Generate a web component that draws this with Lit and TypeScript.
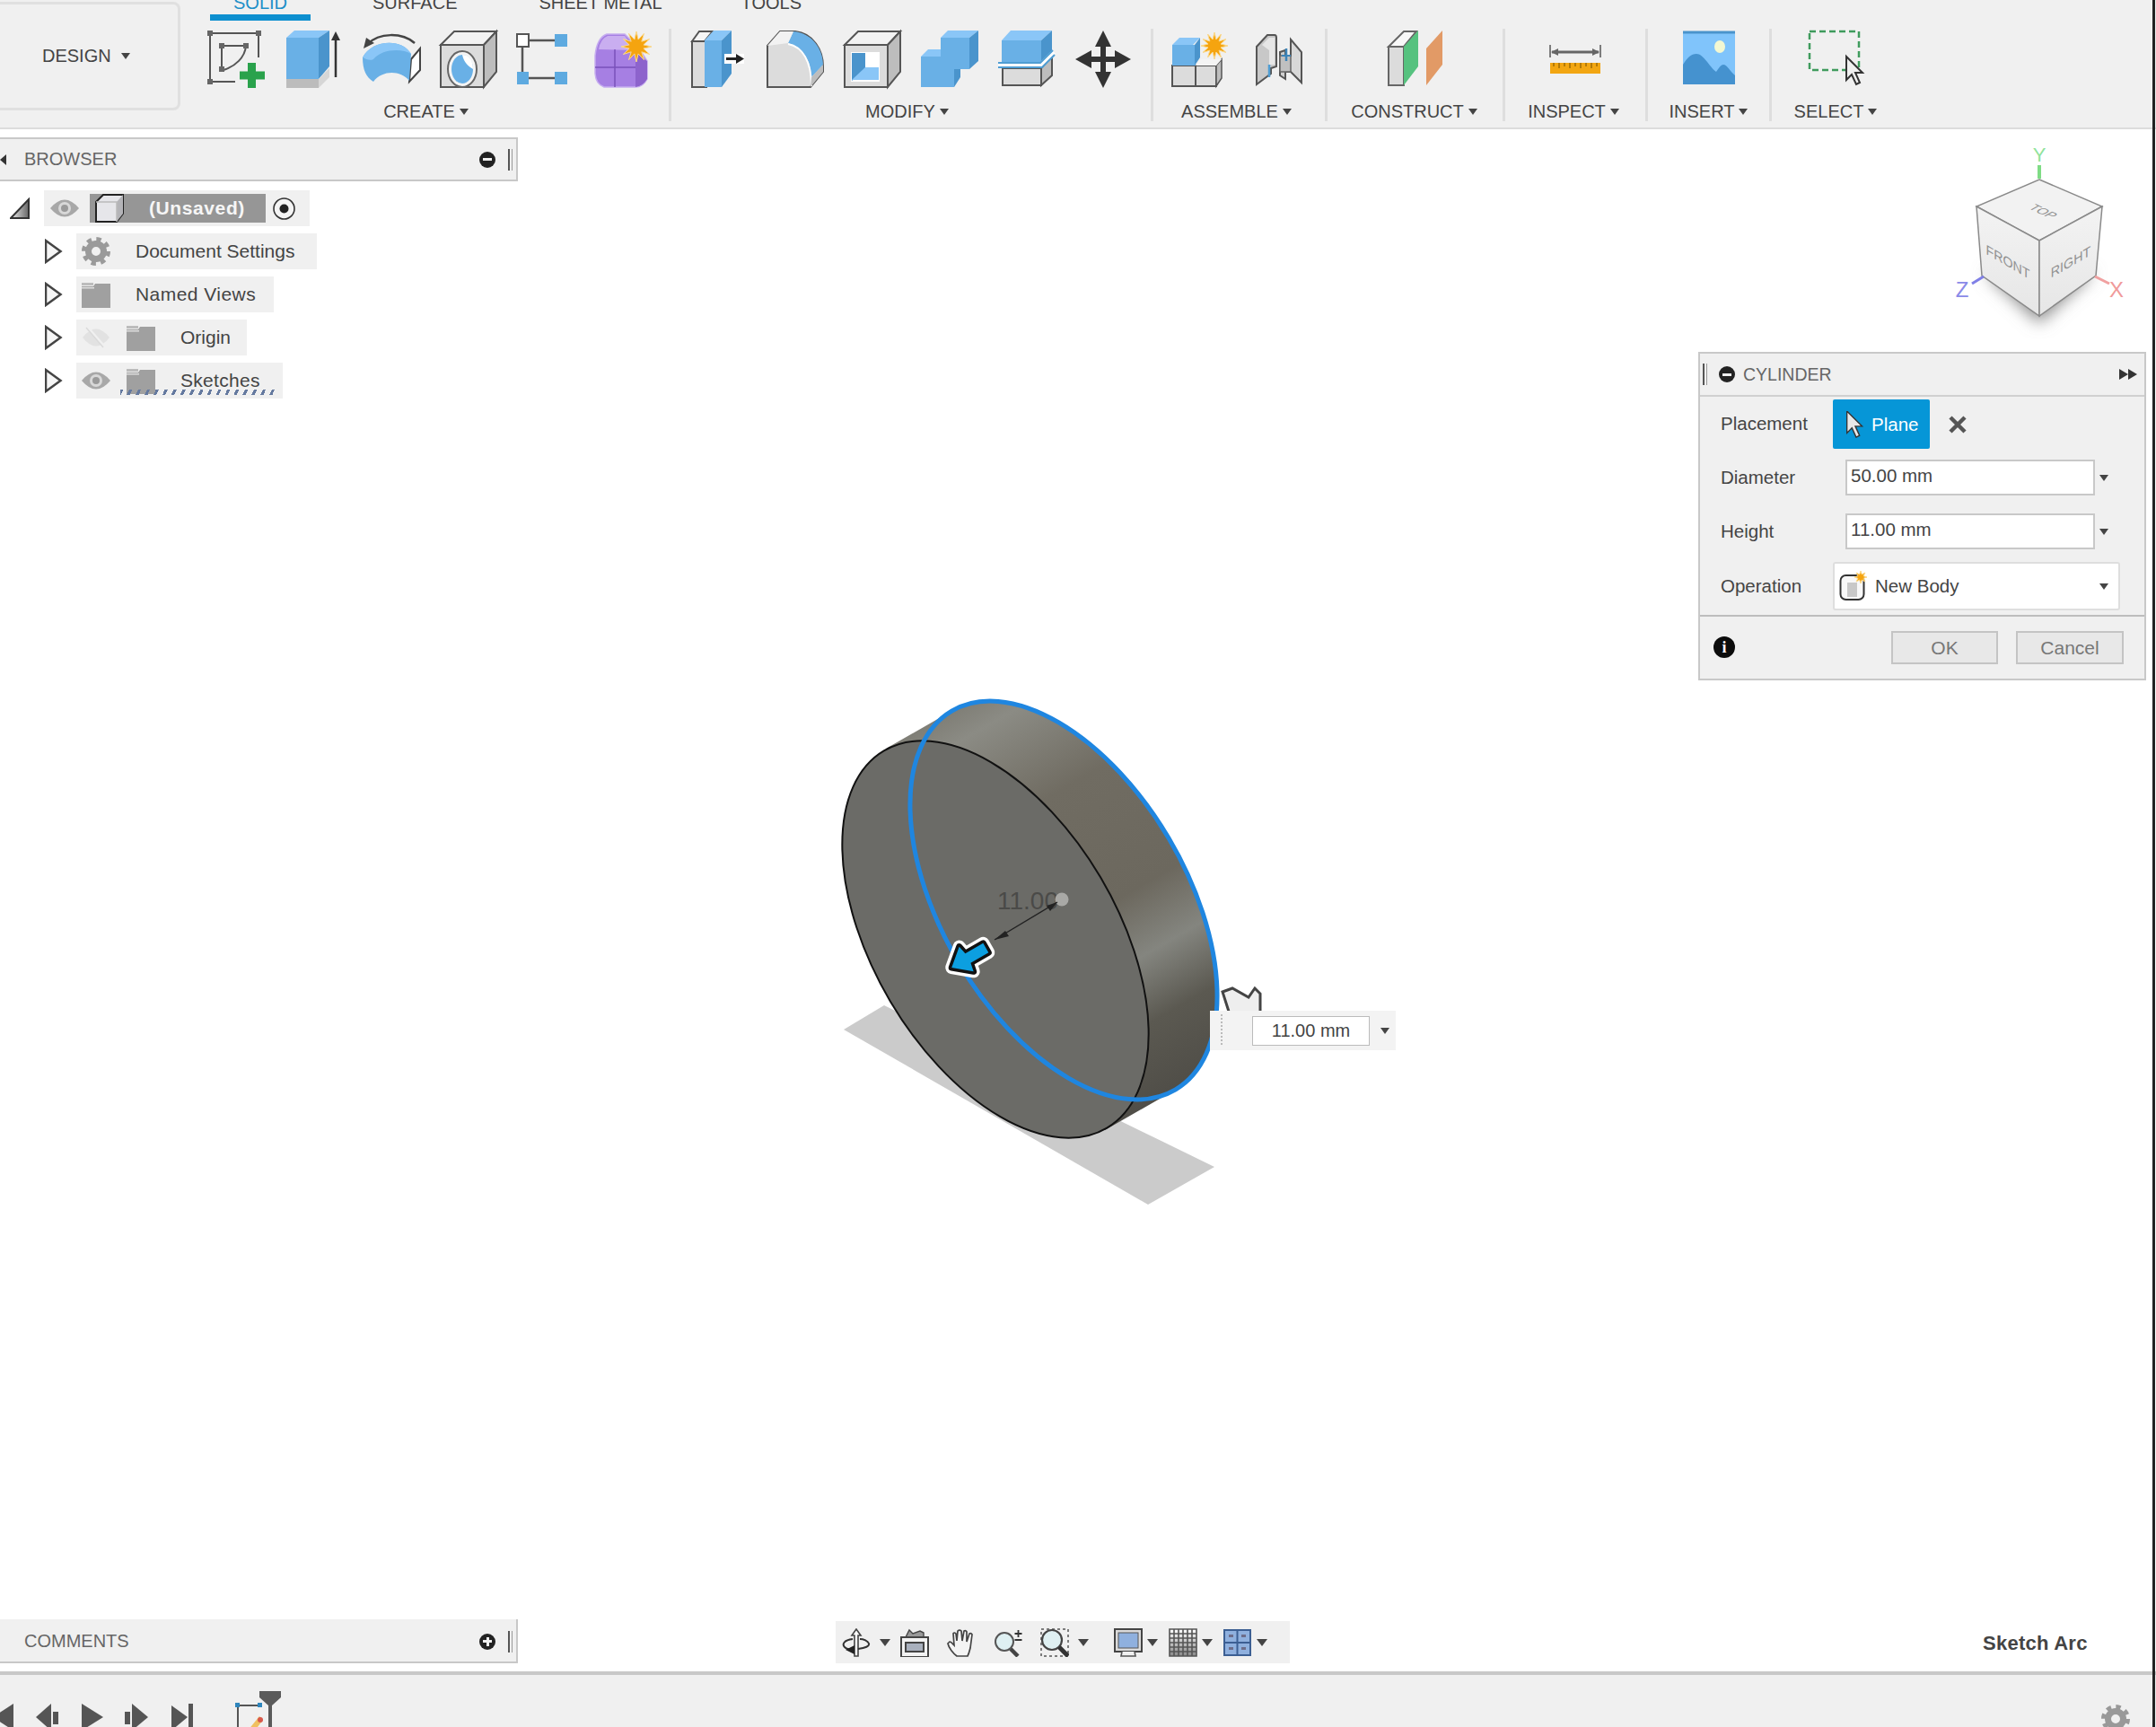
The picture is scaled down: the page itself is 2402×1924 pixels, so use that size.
import { LitElement, html, css, svg } from "lit";
import { customElement } from "lit/decorators.js";

const star = (cx: number, cy: number, r: number, n = 12) => {
  const pts: string[] = [];
  for (let i = 0; i < n * 2; i++) {
    const rad = i % 2 ? r * 0.48 : r;
    const a = (Math.PI * i) / n - Math.PI / 2;
    pts.push(`${(cx + rad * Math.cos(a)).toFixed(1)},${(cy + rad * Math.sin(a)).toFixed(1)}`);
  }
  return svg`<polygon points=${pts.join(" ")} fill="#f5a40f" stroke="#fbd98c" stroke-width="1"/>`;
};

const H = (x: number, y: number, c = "#666", s = 6) =>
  svg`<rect x=${x - s / 2} y=${y - s / 2} width=${s} height=${s} fill=${c}/>`;

const CURSOR = "M0 0 L0 26 L6 20 L11 31 L15 29 L10 18 L18 18 Z";

const ICONS: Record<string, unknown> = {
  sketch: svg`
    <path d="M2 3V57M2 3H56M56 3V30M2 57H30" fill="none" stroke="#555" stroke-width="2"/>
    ${H(2, 3)}${H(56, 3)}${H(2, 57)}
    <path d="M15 17H42M15 17V43M42 17C41 30 30 40 17 44" fill="none" stroke="#555" stroke-width="2"/>
    ${H(15, 17)}${H(42, 17)}${H(15, 43)}
    <rect x="44" y="36" width="9" height="28" fill="#2aa24c"/><rect x="35" y="45.5" width="28" height="9" fill="#2aa24c"/>`,
  extrude: svg`
    <polygon points="1,8 10,0 49,0 37,8" fill="#8ac6f7"/>
    <polygon points="1,8 37,8 37,54 1,54" fill="#69b0e6"/>
    <polygon points="37,8 49,0 49,40 37,54" fill="#4a94cc"/>
    <polygon points="1,54 37,54 37,64 1,64" fill="#bcbcbc"/>
    <polygon points="37,54 49,42 49,52 37,64" fill="#d6d6d6"/>
    <path d="M56 52V8" stroke="#333" stroke-width="2.5"/><polygon points="56,1 61,11 51,11" fill="#333"/>`,
  revolve: svg`
    <path d="M6 15C18 2 44 2 58 14" fill="none" stroke="#444" stroke-width="2.5"/><polygon points="1,20 4,8 13,14" fill="#444"/>
    <path d="M54 32L64 20V44L52 57Z" fill="#fff" stroke="#444" stroke-width="2"/>
    <path d="M0 30C10 10 44 8 54 26L52 56C42 44 22 44 12 57C4 52 0 44 0 30Z" fill="#69b0e6"/>
    <path d="M0 30C10 10 44 8 54 26C44 20 22 20 12 32C8 34 4 32 0 30Z" fill="#8ac6f7"/>`,
  hole: svg`
    <polygon points="1,16 16,1 63,1 49,16" fill="#f2f2f2" stroke="#555" stroke-width="2"/>
    <polygon points="49,16 63,1 63,46 49,63" fill="#bdbdbd" stroke="#555" stroke-width="2"/>
    <rect x="1" y="16" width="48" height="47" fill="#dcdcdc" stroke="#555" stroke-width="2"/>
    <ellipse cx="25" cy="43" rx="16" ry="20" fill="#f4f4f4" stroke="#666" stroke-width="2"/>
    <ellipse cx="25" cy="43" rx="12" ry="16" fill="#69b0e6"/>
    <path d="M25 27C33 27 37 34 37 43C32 40 27 36 25 27Z" fill="#fff"/>`,
  pattern: svg`
    <path d="M13 11H42M6 18V46M13 53H42" stroke="#555" stroke-width="2.5" fill="none"/>
    <rect x="0" y="4" width="13" height="14" fill="#fff" stroke="#555" stroke-width="2"/>
    <rect x="42" y="4" width="14" height="14" fill="#5eaae0"/>
    <rect x="0" y="46" width="13" height="14" fill="#5eaae0"/><rect x="42" y="46" width="14" height="14" fill="#5eaae0"/>`,
  form: svg`
    <path d="M1 28Q3 8 14 4H34L50 20L59 34V54Q54 64 44 63H11Q2 60 1 48Z" fill="#a67fe3" stroke="#c6adf0" stroke-width="1.5"/>
    <path d="M46 24L59 34V54Q54 62 46 63Z" fill="#8d63cc"/>
    <path d="M5 21Q7 9 15 6H34L46 22Z" fill="#c9aef0"/>
    <path d="M1 41H46M23 21V63" stroke="#7a52ba" stroke-width="1.5" fill="none"/>
    ${star(47, 18, 17)}`,
  presspull: svg`
    <polygon points="3,12 11,1 26,1 17,12" fill="#f6f6f6" stroke="#555" stroke-width="2"/>
    <rect x="3" y="12" width="16" height="51" fill="#dcdcdc" stroke="#555" stroke-width="2"/>
    <polygon points="17,11 27,0 47,0 36,11" fill="#8ac6f7"/>
    <rect x="17" y="11" width="19" height="52" fill="#69b0e6"/>
    <polygon points="36,11 47,0 47,48 36,63" fill="#4a94cc"/>
    <rect x="39" y="26" width="22" height="11" fill="#fff"/>
    <path d="M41 31.5H54" stroke="#222" stroke-width="3"/><polygon points="52,26 61,31.5 52,37" fill="#222"/>`,
  fillet: svg`
    <path d="M1 17L15 1H32C52 3 63 22 63 40V46L49 63H1Z" fill="#dcdcdc" stroke="#555" stroke-width="2"/>
    <path d="M30 1C52 3 63 22 63 38L50 52C50 34 40 18 24 14Z" fill="#69b0e6"/>
    <path d="M1 17L15 1H30L24 14Z" fill="#f2f2f2"/>
    <path d="M24 15C40 18 50 34 50 62" fill="none" stroke="#fff" stroke-width="2"/>
    <polygon points="50,52 63,38 63,46 49,63" fill="#bdbdbd"/>`,
  shell: svg`
    <polygon points="1,16 16,1 63,1 49,16" fill="#f2f2f2" stroke="#555" stroke-width="2"/>
    <polygon points="49,16 63,1 63,46 49,63" fill="#bdbdbd" stroke="#555" stroke-width="2"/>
    <rect x="1" y="16" width="48" height="47" fill="#dcdcdc" stroke="#555" stroke-width="2"/>
    <rect x="8" y="24" width="32" height="33" fill="#fff"/>
    <polygon points="9,25 24,25 24,44 9,56" fill="#4a94cc"/>
    <polygon points="24,41 39,41 39,55 9,55" fill="#8ac6f7"/>`,
  combine: svg`
    <polygon points="22,8 30,0 64,0 54,8" fill="#8ac6f7"/>
    <rect x="22" y="8" width="32" height="35" fill="#69b0e6"/>
    <polygon points="54,8 64,0 64,34 54,43" fill="#4a94cc"/>
    <polygon points="0,29 8,21 22,21 22,29" fill="#8ac6f7"/>
    <rect x="0" y="29" width="37" height="34" fill="#69b0e6"/>
    <polygon points="37,43 44,43 44,52 37,63" fill="#4a94cc"/>`,
  split: svg`
    <polygon points="4,11 14,0 60,0 48,11" fill="#8ac6f7"/>
    <rect x="4" y="11" width="44" height="24" fill="#69b0e6"/>
    <polygon points="48,11 60,0 60,22 48,34" fill="#4a94cc"/>
    <rect x="5" y="42" width="43" height="19" fill="#dcdcdc" stroke="#555" stroke-width="2"/>
    <polygon points="48,42 60,28 60,50 48,61" fill="#bdbdbd" stroke="#555" stroke-width="2"/>
    <path d="M0 38H48L62 24" fill="none" stroke="#fff" stroke-width="5"/>
    <path d="M0 36H47L61 22M0 41H49L63 27" fill="none" stroke="#4f9dd3" stroke-width="2"/>`,
  move: svg`
    <path d="M31 8V56M8 32H54" stroke="#333" stroke-width="6"/>
    <polygon points="31,0 40,18 22,18" fill="#333"/><polygon points="31,64 40,46 22,46" fill="#333"/>
    <polygon points="0,32 18,22 18,42" fill="#333"/><polygon points="62,32 44,22 44,42" fill="#333"/>`,
  newcomp: svg`
    <rect x="1" y="39" width="26" height="23" fill="#dcdcdc" stroke="#555" stroke-width="2"/>
    <rect x="27" y="39" width="23" height="23" fill="#dcdcdc" stroke="#555" stroke-width="2"/>
    <polygon points="50,39 56,32 56,53 50,62" fill="#bdbdbd" stroke="#555" stroke-width="1.5"/>
    <polygon points="27,39 33,32 56,32 50,39" fill="#f4f4f4"/>
    <polygon points="1,16 9,8 32,8 24,16" fill="#8ac6f7"/>
    <rect x="1" y="16" width="26" height="23" fill="#69b0e6"/>
    <polygon points="26,16 32,8 32,30 26,39" fill="#4a94cc"/>
    ${star(48, 17, 15)}`,
  joint: svg`
    <path d="M8 60V18L20 5H28Q30 5 30 8V40L24 42V48L8 60Z" fill="#c8c8c8" stroke="#555" stroke-width="2"/>
    <path d="M14 16L22 8H28V38H22V22L14 16Z" fill="#e6e6e6"/>
    <path d="M22 38V52" stroke="#4f9dd3" stroke-width="2.5"/>
    <path d="M34 24L40 22V54L34 50Z" fill="#cfcfcf" stroke="#555" stroke-width="2"/>
    <path d="M46 10L58 24V58L46 46H40V30L46 28Z" fill="#d8d8d8" stroke="#555" stroke-width="2"/>
    <rect x="34" y="28" width="12" height="18" fill="#c0c0c0" stroke="#666" stroke-width="1.5"/>
    <path d="M41 20V34" stroke="#3d84b8" stroke-width="2.5"/><path d="M36 28H46" stroke="#3d84b8" stroke-width="2"/>`,
  construct: svg`
    <polygon points="2,18 19,1 33,1 19,18" fill="#f8f8f8" stroke="#666" stroke-width="2"/>
    <rect x="2" y="18" width="17" height="43" fill="#dcdcdc" stroke="#666" stroke-width="2"/>
    <polygon points="19,18 35,0 35,40 19,61" fill="#56c27f"/>
    <polygon points="44,20 62,0 62,38 44,61" fill="#e29a66"/>`,
  inspect: svg`
    <path d="M4 16V30M60 16V30" stroke="#555" stroke-width="1.5"/>
    <path d="M6 24H58" stroke="#666" stroke-width="3"/>
    <polygon points="5,24 13,20 13,28" fill="#666"/><polygon points="59,24 51,20 51,28" fill="#666"/>
    <rect x="4" y="36" width="56" height="12" fill="#f2a612"/>
    <path d="M8 36v4M14 36v6M20 36v4M26 36v6M32 36v4M38 36v6M44 36v4M50 36v6M56 36v4" stroke="#8a5e00" stroke-width="1.2"/>`,
  insert: svg`
    <rect x="3" y="2" width="58" height="58" fill="#80c4fb"/>
    <path d="M3 2H61" stroke="#4a94cc" stroke-width="3"/>
    <path d="M3 38C8 30 12 26 18 26C26 26 32 40 40 46C43 42 45 38 48 38C52 38 56 46 61 50V60H3Z" fill="#4592cf"/>
    <ellipse cx="44" cy="18" rx="6" ry="7" fill="#f3f8d2"/>`,
  select: svg`
    <rect x="3" y="1" width="55" height="43" fill="none" stroke="#3f9b5d" stroke-width="2.5" stroke-dasharray="7 4"/>
    <path d=${CURSOR} transform="translate(44 29)" fill="#f0f0f0" stroke="#333" stroke-width="2"/>`,
};

const GROUPS = [
  { label: "CREATE", cls: "g-create", tools: ["sketch", "extrude", "revolve", "hole", "pattern", "form"] },
  { label: "MODIFY", cls: "g-modify", tools: ["presspull", "fillet", "shell", "combine", "split", "move"] },
  { label: "ASSEMBLE", cls: "g-assemble", tools: ["newcomp", "joint"] },
  { label: "CONSTRUCT", cls: "g-construct", tools: ["construct"] },
  { label: "INSPECT", cls: "g-inspect", tools: ["inspect"] },
  { label: "INSERT", cls: "g-insert", tools: ["insert"] },
  { label: "SELECT", cls: "g-select", tools: ["select"] },
];

const gear = (fill: string) => html`<svg class="ic32" viewBox="0 0 32 32">
  <circle cx="16" cy="16" r="13" fill="none" stroke=${fill} stroke-width="6" stroke-dasharray="5.1 5.1"/>
  <circle cx="16" cy="16" r="8.5" fill="none" stroke=${fill} stroke-width="7"/>
</svg>`;
const eye = (faded = false) => html`<svg class="ic32" viewBox="0 0 32 32">
  ${faded
    ? svg`<path d="M1 16Q16 -3 31 16Q16 35 1 16Z" fill="#e2e2e2"/><path d="M7 5L26 27" stroke="#f0f0f0" stroke-width="3"/><path d="M5 5L24 27" stroke="#dadada" stroke-width="1.5"/>`
    : svg`<path d="M0 16Q16 -3 32 16Q16 35 0 16Z" fill="#a8a8a8"/><circle cx="16" cy="16" r="7" fill="#d8d8d8"/><circle cx="16" cy="16" r="4" fill="#9a9a9a"/>`}
</svg>`;
const folder = html`<svg class="ic32" viewBox="0 0 32 32">
  <path d="M0 3H13V6H0Z" fill="#bcbcbc"/><path d="M0 7H13L15 4H32V31H0Z" fill="#a0a0a0"/><rect y="8" width="14" height="1.5" fill="#ddd"/>
</svg>`;
const treeArrow = html`<svg class="arrow" viewBox="0 0 20 28"><path d="M1 2L17.5 14L1 26Z" fill="#f6f6f6" stroke="#444" stroke-width="2.5"/></svg>`;
const caret = html`<span class="caret"></span>`;

const NAV = {
  orbit: svg`<path d="M16 1L11 8H14V31H18V8H21Z" fill="#fff" stroke="#444" stroke-width="1.6"/><path d="M12 12C2 13 0 18 3 21C6 24 13 24 14 24M18 23C26 22 31 20 30 17C29 14 24 12 20 12" fill="none" stroke="#333" stroke-width="2"/><polygon points="4,24 14,19 14,29" fill="#222"/>`,
  look: svg`<path d="M6 10L10 2L14 6L22 3L26 5V10" fill="#999" stroke="#444" stroke-width="1.4"/><rect x="1" y="10" width="30" height="22" fill="#f2f2f2" stroke="#444" stroke-width="2"/><rect x="6" y="16" width="20" height="10" fill="#a9b0bd" stroke="#444" stroke-width="2"/>`,
  hand: svg`<path d="M11 31C7 28 2 22 1 17L3 15C5 15 7 18 8 19L7 6Q8 4 10 6L11 14L12 3Q14 1 16 3L17 14L19 3Q21 2 22 4L22 15L25 6Q27 5 28 7L26 22C25 26 24 29 23 31Z" fill="#f4f4f4" stroke="#444" stroke-width="1.7"/>`,
  zoom: svg`<circle cx="12" cy="15" r="10" fill="#dff0f2" stroke="#555" stroke-width="2"/><path d="M19 23L27 31" stroke="#444" stroke-width="4.5"/><path d="M25 6H33M29 2V10M25 13H33" stroke="#333" stroke-width="1.8" transform="translate(-1.5 0)"/>`,
  fit: svg`<rect x="1" y="1" width="30" height="30" fill="none" stroke="#555" stroke-width="1.5" stroke-dasharray="3 3"/><circle cx="13" cy="13" r="11" fill="#dff0f2" stroke="#444" stroke-width="2.2"/><path d="M21 21L31 31" stroke="#333" stroke-width="5"/>`,
  display: svg`<rect x="1" y="1" width="30" height="25" fill="#dadada" stroke="#444" stroke-width="2"/><rect x="5" y="5" width="22" height="17" fill="#8fb0de" stroke="#555"/><path d="M9 26L8 31H24L23 26" fill="#f0f0f0" stroke="#555" stroke-width="1.6"/>`,
  grid: svg`<defs><linearGradient id="gg" x1="0" y1="0" x2="0" y2="1"><stop offset="0" stop-color="#fff"/><stop offset="1" stop-color="#888"/></linearGradient></defs><rect x="1" y="1" width="30" height="30" fill="url(#gg)"/><path d="M1 1H31V31H1ZM6 1V31M11 1V31M16 1V31M21 1V31M26 1V31M1 6H31M1 11H31M1 16H31M1 21H31M1 26H31" fill="none" stroke="#555" stroke-width="1.6"/>`,
  views: svg`<rect x="1" y="2" width="29" height="28" fill="#8fb0de" stroke="#3c5f93" stroke-width="2"/><path d="M15.5 2V30M1 16H30" stroke="#3c5f93" stroke-width="2"/><rect x="6" y="7" width="5" height="3" fill="#6d6d8a"/><rect x="20" y="7" width="5" height="3" fill="#6d6d8a"/><rect x="6" y="21" width="5" height="3" fill="#6d6d8a"/><rect x="20" y="21" width="5" height="3" fill="#6d6d8a"/>`,
};
const navIcon = (k: keyof typeof NAV) => html`<svg class="ic32" viewBox="0 0 32 32">${NAV[k]}</svg>`;

@customElement("app-root")
export class AppRoot extends LitElement {
  static styles = css`
    :host { display: block; width: 2402px; height: 1924px; overflow: hidden; position: relative; background: #fff; font-family: "Liberation Sans", Arial, sans-serif; color: #444; }
    * { box-sizing: border-box; }
    svg text { font-family: "Liberation Sans", Arial, sans-serif; }
    .page { display: flex; flex-direction: column; height: 100%; }
    .edge { position: absolute; top: 0; bottom: 0; right: 1px; width: 3px; background: #222; }
    .ic32 { width: 32px; height: 32px; flex: none; display: block; }
    .caret { display: inline-block; flex: none; width: 0; height: 0; border-left: 5px solid transparent; border-right: 5px solid transparent; border-top: 7px solid #444; }

    .ribbon { flex: none; height: 144px; display: flex; background: #f0f0f0; border-bottom: 2px solid #dcdcdc; }
    .design { flex: none; width: 201px; height: 121px; margin-top: 2px; padding-left: 47px; display: flex; align-items: center; gap: 11px; font-size: 20px; border: 3px solid #e0e0e0; border-left: none; border-radius: 0 8px 8px 0; }
    .main { flex: 1; min-width: 0; }
    .tabs { display: flex; gap: 41px; margin-top: -7px; margin-left: 33px; height: 30px; }
    .tab { padding: 0 26px; height: 30px; line-height: 20px; font-size: 20px; white-space: nowrap; }
    .tab:nth-child(2) { margin-left: 2px; margin-right: -2px; }
    .tab:last-child { margin-left: -5px; }
    .tab.on { color: #1e8fc8; border-bottom: 7px solid #0d8fcf; }
    .groups { display: flex; margin-top: 9px; margin-left: 20px; }
    .sep { flex: none; width: 3px; height: 103px; background: #dedede; }
    .group { flex: none; display: flex; flex-direction: column; align-items: center; padding-top: 2px; }
    .g-create { width: 524px; padding-right: 8px; }
    .g-modify { width: 534px; }
    .g-assemble { width: 191px; }
    .g-assemble .tool { width: 87px; }
    .g-construct { width: 195px; }
    .g-inspect { width: 156px; }
    .g-insert { width: 135px; }
    .g-select { width: 142px; }
    .tools { display: flex; justify-content: center; }
    .tool { width: 86px; height: 64px; display: flex; justify-content: center; }
    .tool svg { width: 64px; height: 64px; overflow: visible; }
    .label { margin-top: 14px; height: 24px; line-height: 24px; font-size: 20px; display: flex; align-items: center; gap: 5px; white-space: nowrap; }
    .g-create .label, .g-modify .label { margin-right: 9px; }
    .g-assemble .label { margin-right: 6px; }
    .g-inspect .label { margin-right: 4px; }
    .g-construct .label { margin-right: 2px; }

    .viewport { flex: 1; position: relative; background: #fff; min-height: 0; }
    .model { position: absolute; left: 900px; top: 596px; width: 500px; height: 620px; overflow: visible; }
    .cube { position: absolute; left: 2120px; top: 0; width: 278px; height: 236px; }
    .panel { position: absolute; left: 0; width: 577px; height: 49px; display: flex; align-items: center; background: #f0f0f0; font-size: 20px; color: #666; padding-left: 27px; }
    .browser { top: 9px; border: 2px solid #c8c8c8; border-left: none; }
    .comments { bottom: 9px; padding-top: 2px; border-right: 2px solid #c8c8c8; border-bottom: 2px solid #c8c8c8; }
    .panel .back { position: absolute; left: 0; top: 50%; margin-top: -6px; border-top: 6px solid transparent; border-bottom: 6px solid transparent; border-right: 7px solid #333; }
    .round { flex: none; width: 18px; height: 18px; border-radius: 50%; background: #222; position: relative; }
    .round::before { content: ""; position: absolute; left: 4px; right: 4px; top: 7.5px; height: 3px; background: #f0f0f0; }
    .round.plus::after { content: ""; position: absolute; top: 4px; bottom: 4px; left: 7.5px; width: 3px; background: #f0f0f0; }
    .panel .round { margin-left: auto; }
    .pipes { flex: none; width: 5px; height: 24px; border-left: 2px solid #555; border-right: 1px solid #999; }
    .panel .pipes { margin: 0 4px 0 14px; }

    .tree { position: absolute; left: 0; top: 64px; font-size: 21px; color: #444; }
    .node { height: 48px; display: flex; align-items: center; padding-left: 50px; }
    .arrow { flex: none; width: 20px; height: 28px; margin-right: 15px; }
    .pill { position: relative; height: 40px; display: flex; align-items: center; background: #f0f0f0; padding: 0 0 0 6px; white-space: nowrap; }
    .w-doc { width: 268px; }
    .w-views { width: 220px; }
    .w-origin { width: 190px; }
    .w-sketch { width: 230px; }
    .w-views .t { letter-spacing: .45px; }
    .w-sketch .t { letter-spacing: .3px; }
    .pill .ic32 + .ic32 { margin-left: 18px; }
    .pill .t { margin-left: 28px; }
    .node.root { padding-left: 11px; }
    .corner { flex: none; width: 22px; height: 24px; margin-right: 16px; }
    .root .pill { padding: 0 15px 0 7px; }
    .root .hl { width: 196px; height: 32px; margin: 0 7px 0 12px; background: #969696; display: flex; align-items: center; padding-left: 6px; color: #f6f6f6; font-weight: bold; letter-spacing: .6px; }
    .root .hl span { margin-left: 28px; }
    .radio { flex: none; }
    .squiggle { position: absolute; left: 49px; right: 5px; bottom: 4px; height: 6px; background: repeating-linear-gradient(115deg, #64799f 0 3px, transparent 3px 9px); }

    .dialog { position: absolute; left: 1892px; top: 248px; width: 499px; height: 366px; border: 2px solid #c8c8c8; background: #f0f0f0; font-size: 20.5px; display: flex; flex-direction: column; }
    .d-head { flex: none; height: 48px; display: flex; align-items: center; padding: 0 8px 0 3px; border-bottom: 2px solid #d0d0d0; color: #666; font-size: 19.5px; }
    .d-head .round { margin: 0 9px 0 13px; }
    .d-head .ff { margin-left: auto; display: flex; }
    .d-head .ff i { width: 0; height: 0; border-top: 6px solid transparent; border-bottom: 6px solid transparent; border-left: 10px solid #333; }
    .rows { flex: none; padding: 3px 0 0 23px; }
    .row { display: flex; align-items: center; }
    .row > .lab { flex: none; width: 125px; }
    .r1 > .lab { margin-top: -2px; }
    .r4 > .lab { margin-top: -1px; }
    .r1 { height: 55px; }
    .r2 { height: 40px; margin-top: 12px; }
    .r3 { height: 40px; margin-top: 20px; }
    .r4 { height: 54px; margin-top: 14px; }
    .plane { width: 108px; height: 55px; background: #0696d7; border-radius: 2px; display: flex; align-items: center; padding-left: 15px; color: #fff; }
    .plane svg { flex: none; width: 20px; height: 30px; margin-right: 8px; }
    .x { flex: none; width: 24px; height: 24px; margin-left: 19px; }
    .input { width: 278px; height: 40px; margin-left: 14px; background: #fff; border: 2px solid #c8c8c8; padding-left: 4px; line-height: 32px; }
    .row > .caret { margin-left: 5px; }
    .select { width: 320px; height: 54px; background: #fff; border: 2px solid #dedede; border-radius: 3px; display: flex; align-items: center; padding: 0 11px 0 5px; }
    .select svg { flex: none; width: 32px; height: 34px; margin-right: 8px; }
    .select .caret { margin-left: auto; }
    .d-foot { margin-top: 5px; flex: 1; border-top: 2px solid #bdbdbd; display: flex; align-items: center; padding: 0 23px 1px 15px; color: #777; font-size: 21px; }
    .info { flex: none; width: 24px; height: 24px; border-radius: 50%; background: #0c0c0c; color: #fff; font-weight: bold; font-size: 18px; line-height: 24px; text-align: center; font-family: "Liberation Serif", serif; }
    .btn { flex: none; height: 37px; background: #e8e8e8; border: 2px solid #c4c4c4; text-align: center; line-height: 33px; }
    .ok { width: 119px; margin-left: auto; }
    .cancel { width: 120px; margin-left: 20px; }

    .hud { position: absolute; left: 1348px; top: 982px; width: 207px; height: 44px; background: #f3f3f3; display: flex; align-items: center; font-size: 20px; color: #444; }
    .hud .grip { flex: none; width: 2px; height: 36px; margin-left: 12px; background: repeating-linear-gradient(#bbb 0 2px, transparent 2px 4px); }
    .hud .field { flex: none; width: 131px; height: 33px; margin-left: 33px; background: #fff; border: 1.5px solid #bbb; text-align: center; line-height: 30px; }
    .hud .caret { margin-left: 12px; }

    .nav { position: absolute; left: 931px; bottom: 9px; width: 506px; height: 47px; background: #f0f0f0; display: flex; align-items: center; padding-left: 7px; }
    .nav .caret { margin-left: 10px; width: 0; border-left-width: 6px; border-right-width: 6px; border-top-width: 8px; }
    .nav .caret.n { margin-left: 5px; }
    .nav .m11 { margin-left: 11px; }
    .nav .m12 { margin-left: 12px; }
    .nav .m20 { margin-left: 20px; }
    .nav .m28 { margin-left: 28px; }
    .status { position: absolute; left: 2209px; top: 1673px; font-size: 22px; line-height: 28px; font-weight: bold; color: #444; letter-spacing: .25px; }

    .timeline { flex: none; height: 62px; border-top: 4px solid #c8c8c8; background: #f0f0f0; display: flex; padding-top: 32px; overflow: hidden; }
    .timeline svg { flex: none; height: 30px; fill: #555; }
    .t0 { width: 15px; }
    .t1 { width: 25px; margin-left: 25px; }
    .t2 { width: 24px; margin-left: 26px; }
    .t3 { width: 26px; margin-left: 24px; }
    .t4 { width: 24px; margin-left: 26px; }
    .timeline .t5 { width: 52px; height: 44px; margin: -14px 0 0 47px; }
    .timeline .tg { margin: 1px 29px 0 auto; height: 32px; }
  `;

  render() {
    return html`<div class="page">
      <header class="ribbon">
        <div class="design">DESIGN ${caret}</div>
        <div class="main">
          <div class="tabs">
            <div class="tab on">SOLID</div><div class="tab">SURFACE</div><div class="tab">SHEET METAL</div><div class="tab">TOOLS</div>
          </div>
          <div class="groups">
            ${GROUPS.map((g, i) => html`${i ? html`<div class="sep"></div>` : ""}
              <div class="group ${g.cls}">
                <div class="tools">${g.tools.map((t) => html`<div class="tool"><svg viewBox="0 0 64 64">${ICONS[t]}</svg></div>`)}</div>
                <div class="label">${g.label} ${caret}</div>
              </div>`)}
          </div>
        </div>
      </header>

      <main class="viewport">
        ${this.model()}
        ${this.cube()}

        <div class="panel browser"><span class="back"></span>BROWSER<span class="round"></span><span class="pipes"></span></div>
        <div class="tree">
          <div class="node root">
            <svg class="corner" viewBox="0 0 22 24"><defs><linearGradient id="cg" x1="0" y1="0" x2="1" y2="0"><stop offset="0" stop-color="#eee"/><stop offset="1" stop-color="#666"/></linearGradient></defs><path d="M1 23L21 2V23Z" fill="url(#cg)" stroke="#333" stroke-width="2"/></svg>
            <div class="pill">${eye()}
              <div class="hl">
                <svg class="ic32" viewBox="0 0 32 32"><path d="M1 9L9 1H31V22L24 31H1Z" fill="#e6e6ea" stroke="#222" stroke-width="2"/><path d="M24 9L31 1V22L24 31Z" fill="#b4b4b8"/><path d="M1 9H24V31" fill="none" stroke="#bbb" stroke-width="1.5"/></svg>
                <span>(Unsaved)</span>
              </div>
              <svg class="radio" width="27" height="27" viewBox="0 0 27 27"><circle cx="13.5" cy="13.5" r="11.5" fill="#f4f4f4" stroke="#333" stroke-width="1.6"/><circle cx="13.5" cy="13.5" r="5" fill="#222"/></svg>
            </div>
          </div>
          <div class="node">${treeArrow}<div class="pill w-doc">${gear("#9a9a9a")}<span class="t">Document Settings</span></div></div>
          <div class="node">${treeArrow}<div class="pill w-views">${folder}<span class="t">Named Views</span></div></div>
          <div class="node">${treeArrow}<div class="pill w-origin">${eye(true)}${folder}<span class="t">Origin</span></div></div>
          <div class="node">${treeArrow}<div class="pill w-sketch">${eye()}${folder}<span class="t">Sketches</span><span class="squiggle"></span></div></div>
        </div>

        <section class="dialog">
          <div class="d-head"><span class="pipes"></span><span class="round"></span>CYLINDER<span class="ff"><i></i><i></i></span></div>
          <div class="rows">
            <div class="row r1"><span class="lab">Placement</span>
              <div class="plane"><svg viewBox="0 0 20 32"><path d=${CURSOR} fill="#e8e8e8" stroke="#333" stroke-width="1.5"/></svg>Plane</div>
              <svg class="x" viewBox="0 0 24 24"><path d="M4 4L20 20M20 4L4 20" stroke="#555" stroke-width="4.5"/></svg>
            </div>
            <div class="row r2"><span class="lab">Diameter</span><div class="input">50.00 mm</div>${caret}</div>
            <div class="row r3"><span class="lab">Height</span><div class="input">11.00 mm</div>${caret}</div>
            <div class="row r4"><span class="lab">Operation</span>
              <div class="select"><svg viewBox="0 0 32 34"><rect x="1.5" y="5" width="26" height="27" rx="6" fill="#f8f8f8" stroke="#333" stroke-width="2"/><rect x="9" y="13" width="11" height="16" fill="#c8c8c8"/>${star(24, 7, 7, 8)}</svg>New Body${caret}</div>
            </div>
          </div>
          <div class="d-foot"><div class="info">i</div><div class="btn ok">OK</div><div class="btn cancel">Cancel</div></div>
        </section>

        <div class="hud"><span class="grip"></span><div class="field">11.00 mm</div>${caret}</div>

        <div class="panel comments">COMMENTS<span class="round plus"></span><span class="pipes"></span></div>
        <nav class="nav">
          ${navIcon("orbit")}<span class="caret"></span>
          <span class="m11"></span>${navIcon("look")}<span class="m20"></span>${navIcon("hand")}<span class="m20"></span>${navIcon("zoom")}<span class="m20"></span>${navIcon("fit")}<span class="caret"></span>
          <span class="m28"></span>${navIcon("display")}<span class="caret n"></span>
          <span class="m12"></span>${navIcon("grid")}<span class="caret n"></span>
          <span class="m12"></span>${navIcon("views")}<span class="caret n"></span>
        </nav>
        <div class="status">Sketch Arc</div>
      </main>

      <footer class="timeline">
        <svg class="t0" viewBox="0 0 15 30"><path d="M-8 15L15 0V30Z"/></svg>
        <svg class="t1" viewBox="0 0 25 30"><path d="M0 15L17 0V30Z"/><rect x="19" y="9" width="6" height="14"/></svg>
        <svg class="t2" viewBox="0 0 24 30"><path d="M0 0L24 15L0 30Z"/></svg>
        <svg class="t3" viewBox="0 0 26 30"><rect x="0" y="9" width="6" height="14"/><path d="M8 0L26 15L8 30Z"/></svg>
        <svg class="t4" viewBox="0 0 24 30"><path d="M0 2L18 15L0 30Z"/><rect x="19" y="0" width="5" height="30"/></svg>
        <svg class="t5" viewBox="0 0 52 44">
          <path d="M3 16H27M3 16V44M3 42H14" fill="none" stroke="#555" stroke-width="2"/>
          <rect x="0" y="13" width="5" height="5" fill="#2f86bd"/><rect x="25" y="13" width="5" height="5" fill="#2f86bd"/><rect x="0" y="41" width="5" height="5" fill="#2f86bd"/>
          <path d="M27 28L14 44H22L31 32Z" fill="#f0c060"/><circle cx="28" cy="32" r="3" fill="#d8584c"/>
          <path d="M27 0H51V7L41 16H37L27 7Z" fill="#5a5a5a"/><rect x="37" y="10" width="4" height="34" fill="#5a5a5a"/>
        </svg>
        <svg class="tg ic32" viewBox="0 0 32 32">
          <circle cx="16" cy="16" r="13" fill="none" stroke="#999" stroke-width="6" stroke-dasharray="5.1 5.1"/><circle cx="16" cy="16" r="8.5" fill="none" stroke="#999" stroke-width="7"/>
        </svg>
      </footer>
    </div>
    <div class="edge"></div>`;
  }

  private model() {
    // The model drawing is in page coordinates.
    return html`<svg class="model" viewBox="900 740 500 620">
      <defs>
        <linearGradient id="side" gradientUnits="userSpaceOnUse" x1="1063" y1="790" x2="1307" y2="1215">
          <stop offset="0" stop-color="#7f7e76"/><stop offset=".07" stop-color="#8b8b84"/><stop offset=".28" stop-color="#706c62"/>
          <stop offset=".56" stop-color="#6c685e"/><stop offset=".7" stop-color="#84857f"/><stop offset=".84" stop-color="#5b5951"/><stop offset="1" stop-color="#504e48"/>
        </linearGradient>
      </defs>
      <polygon points="940,1147 985,1120 1353,1300 1279,1342" fill="#cbcbcb"/>
      <path d="M987 834L1063 790.5A136 245 -30.6 0 1 1307 1215.5L1231 1259Z" fill="url(#side)"/>
      <ellipse cx="1109" cy="1046.5" rx="136" ry="244" transform="rotate(-30.6 1109 1046.5)" fill="#6b6b67" stroke="#111" stroke-width="2"/>
      <ellipse cx="1185" cy="1003" rx="136" ry="245" transform="rotate(-30.6 1185 1003)" fill="none" stroke="#1f86e0" stroke-width="5"/>
      <text x="1111" y="1013" font-size="28" fill="#4a4a48">11.00</text>
      <circle cx="1183" cy="1002" r="7.5" fill="#a9a9a6"/>
      <path d="M1178 1005L1108 1047" stroke="#222" stroke-width="1.4"/>
      <polygon points="1178,1005 1166,1009 1170,1015" fill="#222"/><polygon points="1108,1047 1120,1037 1124,1043" fill="#222"/>
      <g transform="translate(1081 1066) rotate(-30)">
        <path d="M-24 0L-5 -16L-3 -6H20V6H-3L-5 16Z" fill="#fff" stroke="#fff" stroke-width="14" stroke-linejoin="round"/>
        <path d="M-24 0L-5 -16L-3 -6H20V6H-3L-5 16Z" fill="#111" stroke="#111" stroke-width="7" stroke-linejoin="round"/>
        <path d="M-24 0L-5 -16L-3 -6H20V6H-3L-5 16Z" fill="#0c9fe0"/>
      </g>
      <path d="M1362 1105L1373 1101L1391 1111L1398 1101L1404 1107V1130H1370Z" fill="#eee" stroke="#444" stroke-width="3"/>
    </svg>`;
  }

  private cube() {
    return html`<svg class="cube" viewBox="2120 144 278 236">
      <defs>
        <filter id="bl" x="-50%" y="-50%" width="200%" height="200%"><feGaussianBlur stdDeviation="9"/></filter>
        <linearGradient id="fa" x1="0" y1="0" x2="0" y2="1"><stop offset="0" stop-color="#f3f3f3"/><stop offset="1" stop-color="#e6e6e6"/></linearGradient>
      </defs>
      <polygon points="2212,305 2272,360 2332,305 2272,290" fill="#8c8c8c" filter="url(#bl)"/>
      <polygon points="2272,200 2342,230 2272,268 2202,230" fill="#f2f2f2" stroke="#8a8a8a" stroke-width="1.5"/>
      <polygon points="2202,230 2272,268 2272,352 2208,307" fill="url(#fa)" stroke="#8a8a8a" stroke-width="1.5"/>
      <polygon points="2342,230 2272,268 2272,352 2335,307" fill="url(#fa)" stroke="#8a8a8a" stroke-width="1.5"/>
      <text text-anchor="middle" font-size="14" fill="#909090" transform="matrix(.9 .42 -.9 .5 2272 238)">TOP</text>
      <text text-anchor="middle" font-size="15" fill="#909090" transform="matrix(.95 .55 0 1 2237 297)">FRONT</text>
      <text text-anchor="middle" font-size="15" fill="#909090" transform="matrix(.95 -.55 0 1 2307 297)">RIGHT</text>
      <path d="M2272 199V184" stroke="#7fdc85" stroke-width="4"/>
      <text x="2272" y="180" text-anchor="middle" font-size="22" fill="#8fe39a">Y</text>
      <path d="M2210 308L2197 316" stroke="#7f7fe6" stroke-width="3"/>
      <text x="2186" y="331" text-anchor="middle" font-size="24" fill="#8a8ae8">Z</text>
      <path d="M2334 308L2350 316" stroke="#f0a0a0" stroke-width="3"/>
      <text x="2358" y="331" text-anchor="middle" font-size="24" fill="#f09a9a">X</text>
    </svg>`;
  }
}
